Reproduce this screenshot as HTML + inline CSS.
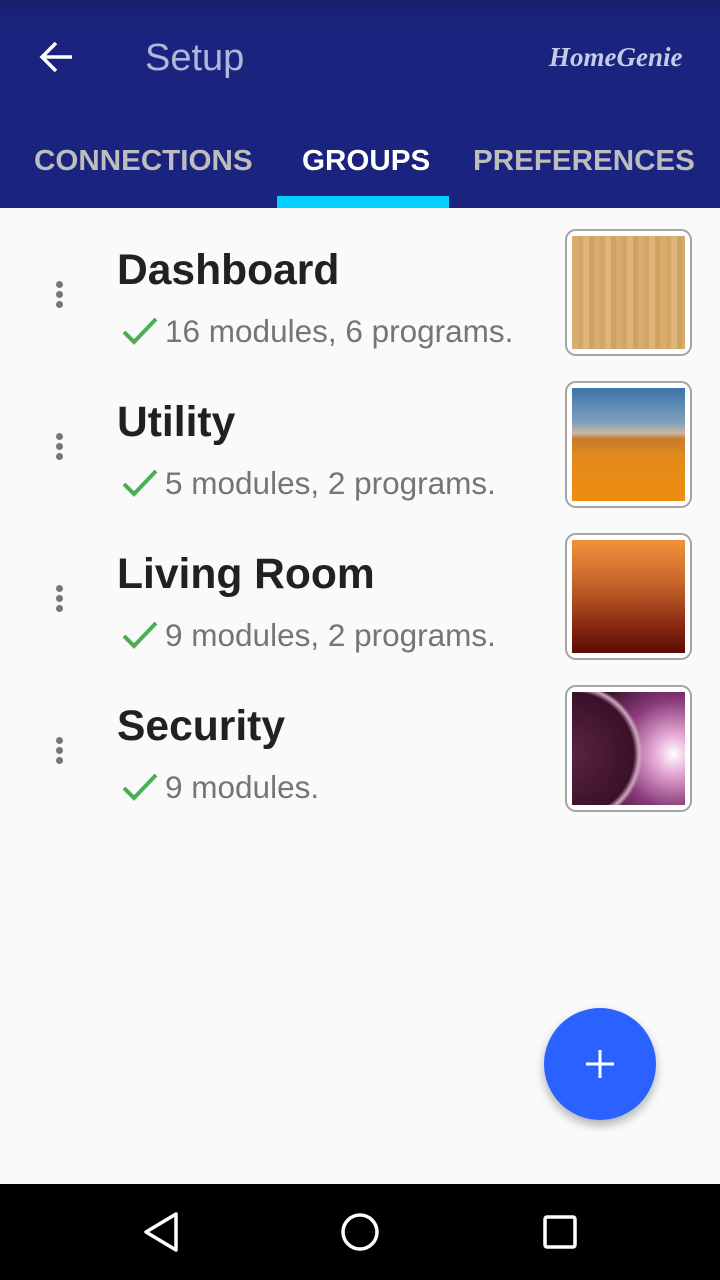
<!DOCTYPE html>
<html><head><meta charset="utf-8"><style>
*{margin:0;padding:0;box-sizing:border-box}
body{width:720px;height:1280px;background:#fafafa;font-family:"Liberation Sans",sans-serif;position:relative;overflow:hidden}
.top{position:absolute;left:0;top:0;width:720px;height:208px;background:#1a237e}
.status{position:absolute;left:0;top:0;width:720px;height:25px;background:linear-gradient(#171f6a,#1a237e)}
.abs{position:absolute;white-space:nowrap}
.tab{top:145px;font-size:29px;font-weight:bold;color:#bdbdbd;transform:scaleX(1.02);transform-origin:left}
.row{position:absolute;left:0;width:720px;height:152px}
.dots{position:absolute;left:56px;top:52px;width:8px}
.dots i{display:block;width:7px;height:7px;border-radius:50%;background:#777;margin-bottom:3px}
.t{position:absolute;left:117px;top:17px;font-size:43px;font-weight:bold;color:#212121;transform:scaleX(.99);transform-origin:left}
.s{position:absolute;left:165px;top:84px;font-size:31.5px;color:#757575}
.ck{position:absolute;left:122px;top:87px}
.th{position:absolute;left:565px;top:0;width:127px;height:127px;border:2px solid #a5a5a5;border-radius:11px;background:#fff}
.th div{position:absolute;left:5px;top:5px;width:113px;height:113px}
</style></head><body>
<div class="top"></div><div class="status"></div>
<svg class="abs" style="left:38px;top:40px" width="36" height="34" viewBox="0 0 36 34"><path d="M34 17H5M18 3L4 17l14 14" stroke="#fff" stroke-width="3.5" fill="none"/></svg>
<div class="abs" style="left:145px;top:37px;font-size:38px;color:#b0b6dc">Setup</div>
<div class="abs" style="left:549px;top:42px;font-size:27px;font-style:italic;font-weight:bold;color:#c5cae9;font-family:'Liberation Serif',serif">HomeGenie</div>
<div class="abs tab" style="left:34px">CONNECTIONS</div>
<div class="abs tab" style="left:302px;color:#fff">GROUPS</div>
<div class="abs tab" style="left:473px">PREFERENCES</div>
<div class="abs" style="left:277px;top:196px;width:172px;height:12px;background:#00cfff"></div>

<div class="row" style="top:229px"><div class="dots"><i></i><i></i><i></i></div>
<div class="t">Dashboard</div><svg class="ck" width="36" height="30"><path d="M2 16l10 10L34 3" stroke="#4caf50" stroke-width="4" fill="none"/></svg><div class="s">16 modules, 6 programs.</div>
<div class="th"><div style="background:repeating-linear-gradient(90deg,#d8ac6e 0 6px,#d2a666 6px 11px,#deb478 11px 17px,#cfa262 17px 22px)"></div></div></div>

<div class="row" style="top:381px"><div class="dots"><i></i><i></i><i></i></div>
<div class="t">Utility</div><svg class="ck" width="36" height="30"><path d="M2 16l10 10L34 3" stroke="#4caf50" stroke-width="4" fill="none"/></svg><div class="s">5 modules, 2 programs.</div>
<div class="th"><div style="background:linear-gradient(180deg,#3d74a8 0%,#7e9fbd 30%,#c9b7a4 40%,#c77a2c 45%,#e28a1c 60%,#f08d10 100%)"></div></div></div>

<div class="row" style="top:533px"><div class="dots"><i></i><i></i><i></i></div>
<div class="t">Living Room</div><svg class="ck" width="36" height="30"><path d="M2 16l10 10L34 3" stroke="#4caf50" stroke-width="4" fill="none"/></svg><div class="s">9 modules, 2 programs.</div>
<div class="th"><div style="background:linear-gradient(180deg,#f0923a 0%,#c4622a 40%,#8a2a12 75%,#5a0e06 100%)"></div></div></div>

<div class="row" style="top:685px"><div class="dots"><i></i><i></i><i></i></div>
<div class="t">Security</div><svg class="ck" width="36" height="30"><path d="M2 16l10 10L34 3" stroke="#4caf50" stroke-width="4" fill="none"/></svg><div class="s">9 modules.</div>
<div class="th"><div style="background:radial-gradient(circle at 0% 55%,#5a2440 0,#3a1028 48%,#cfa8c0 52%,transparent 55%),radial-gradient(circle at 90% 55%,#fff 0,#e8b0d8 15%,#8a3a7a 45%,#2a0c1c 80%)"></div></div></div>

<div class="abs" style="left:544px;top:1008px;width:112px;height:112px;border-radius:50%;background:#2962ff;box-shadow:0 5px 10px rgba(0,0,0,.3)"></div>
<svg class="abs" style="left:584px;top:1048px" width="32" height="32"><path d="M16 2v28M2 16h28" stroke="#fff" stroke-width="3"/></svg>

<div class="abs" style="left:0;top:1184px;width:720px;height:96px;background:#000"></div>
<svg class="abs" style="left:0;top:1184px" width="720" height="96"><path d="M176 30L146 48l30 18z" stroke="#fff" stroke-width="3.5" fill="none" stroke-linejoin="round"/><circle cx="360" cy="48" r="17" stroke="#fff" stroke-width="3.5" fill="none"/><rect x="545" y="33" width="30" height="30" stroke="#fff" stroke-width="3.5" fill="none" rx="2"/></svg>
</body></html>
